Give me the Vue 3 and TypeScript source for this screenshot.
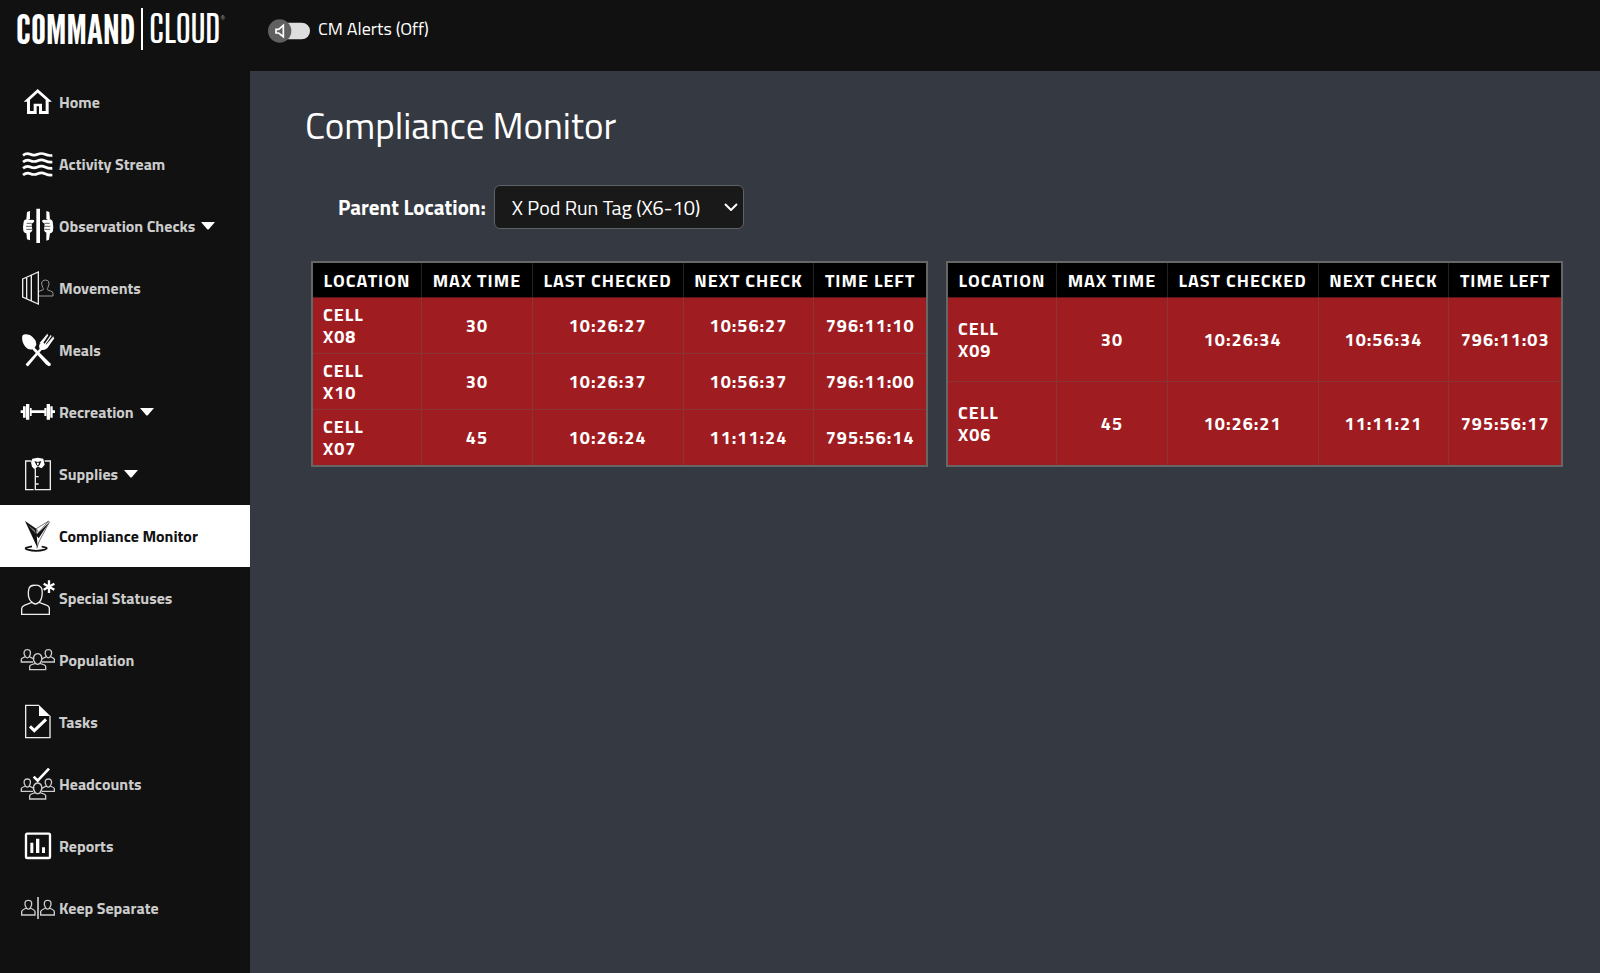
<script setup lang="ts">
import { ref } from 'vue'

interface NavItem {
  id: string
  label: string
  viewBox: string
  expandable?: boolean
}

interface Check {
  location: string
  maxTime: number
  lastChecked: string
  nextCheck: string
  timeLeft: string
}

const navItems: NavItem[] = [
  { id: 'home', label: 'Home', viewBox: '60 29 108 108' },
  { id: 'activity', label: 'Activity Stream', viewBox: '60 215 108 108' },
  { id: 'observation', label: 'Observation Checks', viewBox: '60 400 108 108', expandable: true },
  { id: 'movements', label: 'Movements', viewBox: '60 46 108 108' },
  { id: 'meals', label: 'Meals', viewBox: '60 232 108 108' },
  { id: 'recreation', label: 'Recreation', viewBox: '60 417 108 108', expandable: true },
  { id: 'supplies', label: 'Supplies', viewBox: '60 63 108 108', expandable: true },
  { id: 'compliance', label: 'Compliance Monitor', viewBox: '60 249 108 108' },
  { id: 'special', label: 'Special Statuses', viewBox: '60 435 108 108' },
  { id: 'population', label: 'Population', viewBox: '60 50 108 108' },
  { id: 'tasks', label: 'Tasks', viewBox: '60 236 108 108' },
  { id: 'headcounts', label: 'Headcounts', viewBox: '60 422 108 108' },
  { id: 'reports', label: 'Reports', viewBox: '60 82 108 108' },
  { id: 'separate', label: 'Keep Separate', viewBox: '60 267 108 108' },
]

const active = ref('compliance')
const alertsOn = ref(false)
const parentLocation = ref('X Pod Run Tag (X6-10)')

const columns = ['Location', 'Max Time', 'Last Checked', 'Next Check', 'Time Left']

const boards: Check[][] = [
  [
    { location: 'Cell X08', maxTime: 30, lastChecked: '10:26:27', nextCheck: '10:56:27', timeLeft: '796:11:10' },
    { location: 'Cell X10', maxTime: 30, lastChecked: '10:26:37', nextCheck: '10:56:37', timeLeft: '796:11:00' },
    { location: 'Cell X07', maxTime: 45, lastChecked: '10:26:24', nextCheck: '11:11:24', timeLeft: '795:56:14' },
  ],
  [
    { location: 'Cell X09', maxTime: 30, lastChecked: '10:26:34', nextCheck: '10:56:34', timeLeft: '796:11:03' },
    { location: 'Cell X06', maxTime: 45, lastChecked: '10:26:21', nextCheck: '11:11:21', timeLeft: '795:56:17' },
  ],
]
</script>

<template>
  <div class="app">
    <header class="topbar">
      <a class="logo" href="#">
        <span class="logo-bold">COMMAND</span>
        <span class="logo-rule"></span>
        <span class="logo-light">CLOUD</span>
        <span class="logo-mark">®</span>
      </a>
      <label class="alerts">
        <input v-model="alertsOn" class="alerts-input" type="checkbox" role="switch" />
        <svg class="alerts-switch" viewBox="0 0 126 72" aria-hidden="true">
          <rect x="30" y="11" width="96" height="50" rx="25" fill="#dedede" />
          <circle :cx="alertsOn ? 90 : 35" cy="36" r="35" fill="#606060" />
          <path d="M24 31h8l14-12v34L32 42h-8z" fill="none" stroke="#fff" stroke-width="5" />
        </svg>
        <span class="alerts-text">CM Alerts ({{ alertsOn ? 'On' : 'Off' }})</span>
      </label>
    </header>

    <nav class="sidebar">
      <a
        v-for="item in navItems"
        :key="item.id"
        href="#"
        class="nav-item"
        :class="{ active: active === item.id }"
        @click.prevent="active = item.id"
      >
        <svg class="nav-icon" :viewBox="item.viewBox" aria-hidden="true">
          <g v-if="item.id === 'home'" fill="#fff" fill-rule="evenodd">
            <path d="M113 44 156 82H146V119H117V96H110V119H81V82H71ZM113 55 90 76V110H101V88H126V110H137V76Z" />
          </g>
          <g v-else-if="item.id === 'activity'" fill="none" stroke="#fff" stroke-width="8">
            <path d="M69 243q11-8 22-3t22 0t22 0t22 3" />
            <path d="M69 263q11-9 22-4t22 0t22 0t22 4" />
            <path d="M69 282q11-9 22-4t22 0t22 0t22 4" />
            <path d="M69 302q11-9 22-4t22 0t22 0t22 4" />
          </g>
          <g v-else-if="item.id === 'observation'" fill="#fff">
            <path d="M109 402h11v103h-11zM81 412l9-3v25h-11zM79 475h11v22l-9-3zM139 409l9 3 2 22h-11zM139 475h11l-3 20-8 3z" />
            <path d="M71 441q2-8 13-8l6 3q10-2 12 1 2 3-1 6l-6 4 2 20q-3 8-10 9-14 2-17-8-2-12 1-27zM158 441q-2-8-13-8l-6 3q-10-2-12 1-2 3 1 6l6 4-2 20q3 8 10 9 14 2 17-8 2-12-1-27z" />
            <path d="M80 446h15M78 455h18M79 464h17M149 446h-15M151 455h-18M150 464h-17" stroke="#111" stroke-width="2" />
          </g>
          <g v-else-if="item.id === 'movements'" fill="none" stroke="#eee" stroke-width="4">
            <path d="M68 73 115 52V148L68 127ZM80 68v65M94 62v78" />
            <path d="M117 124h42v-8q0-6-8-7l-9-4q-1-3 2-7 9-21-8-22-17 1-8 22 3 4 2 7l-13 5" stroke="#999" stroke-width="3" />
          </g>
          <g v-else-if="item.id === 'meals'" fill="#fff">
            <path d="M67 243q7-8 24-1 18 12 18 28l-5 9 49 49q0 6-6 7l-8-5-42-46q-12 3-21-8-13-17-9-33z" />
            <path d="m77 329 42-47q-5-11 4-18l19-24 3 2-15 22 4 3 18-26 3 3-18 25 4 3 19-24 3 3-17 24q-8 13-21 11L85 334q-6 2-8-5z" />
            <path d="m118 266 24-29 2 1-20 28zM133 276l27-31 1 2-23 31z" />
          </g>
          <g v-else-if="item.id === 'recreation'" fill="#fff">
            <path d="M62 466h8v8h-8zM69 454h8v34h-8zM78 447h10v47H78zM90 459h5v24h-5zM95 466h38v8H95zM133 459h6v24h-6zM140 447h10v47h-10zM151 454h7v34h-7zM158 466h7v8h-7z" />
          </g>
          <g v-else-if="item.id === 'supplies'" fill="none" stroke="#eee" stroke-width="4">
            <path d="M94 78H77V164H101M106 100V164H151V78H134M106 125h10M106 147h10" />
            <path d="M97 71 113 68 130 71 134 89 125 100 114 95 103 102 96 95 93 82Z" fill="#fff" stroke="none" />
            <path d="M103 78 113 81 124 78 119 90 114 95 109 90Z" fill="#111" stroke="none" />
            <path d="m110 83h7l-2 8h-3z" fill="#fff" stroke="none" />
          </g>
          <g v-else-if="item.id === 'compliance'" fill="#111">
            <path d="M75 258 109 281 113 340Z" />
            <path d="m109 281 37-23-31 35z" fill="#fff" stroke="#333" stroke-width="2" />
            <path d="m106 298 9-4 34-34-33 50z" />
            <path d="m149 260-31 58-8 22" fill="none" stroke="#333" stroke-width="2" />
            <path d="m83 269 21 16 4 12z" fill="#777" />
            <path d="M96 334Q66 339 83 344 108 351 134 344 150 338 125 335" fill="none" stroke="#111" stroke-width="5" />
          </g>
          <g v-else-if="item.id === 'special'" fill="none" stroke="#eee" stroke-width="4">
            <path d="M65 538H148V520Q148 514 139 510L117 502C128 492 129 465 123 457Q115 449 106 451 92 449 87 460C82 476 85 494 96 502L73 511Q65 515 65 521ZM96 502Q106 512 117 502" />
            <path d="M147 436V474M131 446 163 464M163 446 131 464" stroke="#fff" stroke-width="7" />
          </g>
          <g v-else-if="item.id === 'population' || item.id === 'headcounts'" :transform="item.id === 'headcounts' ? 'translate(0 388)' : undefined" fill="none" stroke="#ccc" stroke-width="4">
            <path d="M99 110H64V102Q64 99 76 94C68 81 73 73 82 73 91 73 95 81 88 94L102 101M126 110H163V102Q163 99 151 94C159 81 154 73 145 73 136 73 132 81 139 94L125 101M76 94q6 7 12 0M139 94q6 7 12 0" />
            <path d="M89 133H137V123Q137 119 120 114C131 100 124 85 113 85 102 85 95 100 106 114Q89 119 89 123ZM106 114q7 6 14 0" />
            <path v-if="item.id === 'headcounts'" d="m101 66 12 12 34-36" stroke="#fff" stroke-width="8" />
          </g>
          <g v-else-if="item.id === 'tasks'" fill="none" stroke="#eee" stroke-width="4">
            <path d="M117 240H77V337H150V272" />
            <path d="M117 239 151 272H117Z" fill="#fff" stroke="none" />
            <path d="m90 303 13 13 35-34" stroke="#fff" stroke-width="9" />
          </g>
          <g v-else-if="item.id === 'reports'" fill="#fff">
            <rect x="78" y="99" width="72" height="73" rx="4" fill="none" stroke="#fff" stroke-width="7" />
            <path d="M91 126h9v31h-9zM108 114h10v43h-10zM126 140h9v17h-9z" />
          </g>
          <g v-else fill="none" stroke="#ccc" stroke-width="4">
            <path d="M65 342H105V332Q105 328 91 321C99 306 95 298 85 298 75 298 71 306 79 321Q65 328 65 332ZM122 342H163V332Q163 328 149 321C157 306 153 298 143 298 133 298 129 306 137 321Q122 328 122 332ZM79 321q6 7 12 0M137 321q6 7 12 0" />
            <path d="M114 288V354" stroke-width="5" />
          </g>
        </svg>
        <span>{{ item.label }}</span>
        <svg v-if="item.expandable" class="caret" viewBox="0 0 14 8" aria-hidden="true">
          <path d="M0 0h14L8 7q-1 1-2 0z" fill="#fff" />
        </svg>
      </a>
    </nav>

    <main class="content">
      <h1>Compliance Monitor</h1>
      <div class="filter">
        <label for="parent-location">Parent Location:</label>
        <div class="select-wrap">
          <select id="parent-location" v-model="parentLocation">
            <option>X Pod Run Tag (X6-10)</option>
          </select>
          <svg class="chevron" viewBox="0 0 14 8" aria-hidden="true">
            <path d="m1 1 6 6 6-6" fill="none" stroke="#fff" stroke-width="2" />
          </svg>
        </div>
      </div>
      <div class="boards">
        <table v-for="(board, index) in boards" :key="index">
          <thead>
            <tr>
              <th v-for="column in columns" :key="column" scope="col">{{ column }}</th>
            </tr>
          </thead>
          <tbody>
            <tr v-for="check in board" :key="check.location">
              <td class="location"><span>{{ check.location }}</span></td>
              <td>{{ check.maxTime }}</td>
              <td>{{ check.lastChecked }}</td>
              <td>{{ check.nextCheck }}</td>
              <td>{{ check.timeLeft }}</td>
            </tr>
          </tbody>
        </table>
      </div>
    </main>
  </div>
</template>

<style>
body {
  margin: 0;
  background: #353941;
}
</style>

<style scoped>
.app {
  display: grid;
  grid-template-columns: 250px minmax(0, 1fr);
  grid-template-rows: 71px 1fr;
  min-height: 100vh;
  background: #353941;
  color: #fff;
  font-family: "Titillium Web", Roboto, "Liberation Sans", sans-serif;
}

.topbar {
  grid-column: 1 / -1;
  display: flex;
  align-items: flex-start;
  background: #111;
}

.logo {
  display: flex;
  align-items: center;
  box-sizing: border-box;
  width: 250px;
  height: 58px;
  padding-left: 16px;
  color: #fff;
  text-decoration: none;
}

.logo-bold {
  font-family: "League Gothic", "Roboto Condensed", sans-serif;
  font-size: 42px;
  line-height: 42px;
}

.logo-rule {
  width: 2px;
  height: 42px;
  margin: 0 6px;
  background: #fff;
}

.logo-light {
  font-family: "Big Shoulders Display", "Roboto Condensed", sans-serif;
  font-size: 38px;
  font-weight: 600;
  line-height: 42px;
}

.logo-mark {
  align-self: flex-start;
  margin-top: 12px;
  color: #888;
  font-size: 8px;
}

.alerts {
  display: flex;
  align-items: center;
  gap: 8px;
  height: 62px;
  padding-left: 18px;
  font-size: 18px;
  cursor: pointer;
}

.alerts-input {
  position: absolute;
  opacity: 0;
}

.alerts-switch {
  width: 42px;
  height: 24px;
}

.alerts-text {
  padding-bottom: 6px;
}

.sidebar {
  background: #111;
}

.nav-item {
  display: flex;
  align-items: center;
  height: 62px;
  padding-left: 20px;
  color: #ccc;
  font-size: 16px;
  font-weight: 700;
  line-height: 24px;
  text-decoration: none;
}

.nav-item.active {
  background: #fff;
  color: #111;
}

.nav-icon {
  width: 36px;
  height: 36px;
  margin-right: 3px;
}

.caret {
  width: 14px;
  height: 8px;
  margin-left: 6px;
}

.content {
  padding: 30px 37px 40px 55px;
}

h1 {
  margin: 0;
  font-size: 37px;
  font-weight: 400;
  line-height: 48px;
}

.filter {
  display: flex;
  align-items: center;
  gap: 8px;
  margin-top: 36px;
  padding-left: 33px;
}

.filter label {
  font-size: 21px;
  font-weight: 700;
  line-height: 40px;
}

.select-wrap {
  position: relative;
}

select {
  appearance: none;
  width: 250px;
  height: 44px;
  padding: 0 36px 0 17px;
  border: 1px solid #5d6168;
  border-radius: 6px;
  background: #191919;
  color: #fff;
  font-family: inherit;
  font-size: 20px;
}

.chevron {
  position: absolute;
  top: 18px;
  right: 6px;
  width: 14px;
  height: 8px;
  pointer-events: none;
}

.boards {
  display: grid;
  grid-template-columns: repeat(2, minmax(0, 1fr));
  gap: 18px;
  margin-top: 32px;
  padding-left: 6px;
}

table {
  width: 100%;
  border: 2px solid #666;
  border-spacing: 0;
  font-size: 18px;
  font-weight: 700;
  letter-spacing: 1px;
  line-height: 22px;
  text-transform: uppercase;
}

th {
  height: 34px;
  padding: 2px 10px 0;
  box-sizing: border-box;
  border-right: 1px solid #222;
  background: #000;
  white-space: nowrap;
}

td {
  height: 55px;
  padding: 0;
  border-top: 1px solid #8b3437;
  border-right: 1px solid #8b3437;
  background: #9f1d21;
  text-align: center;
}

th:last-child,
td:last-child {
  border-right: 0;
}

tbody tr:first-child td {
  border-top-color: #5c1517;
}

.location {
  padding: 0 10px;
  text-align: left;
}

.location span {
  display: block;
  width: min-content;
}
</style>
